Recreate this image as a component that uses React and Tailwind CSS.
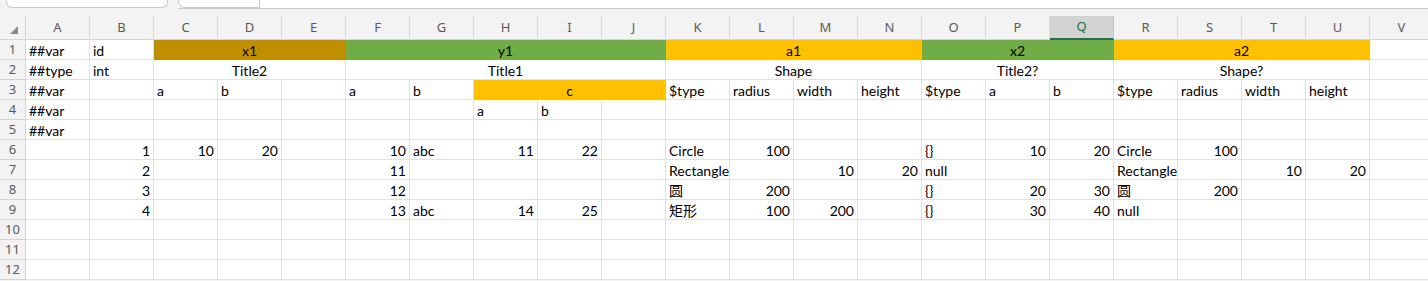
const cols = ['A', 'B', 'C', 'D', 'E', 'F', 'G', 'H', 'I', 'J', 'K', 'L', 'M', 'N', 'O', 'P', 'Q', 'R', 'S', 'T', 'U', 'V'];

const GOLD = 'bg-[#bf8f00] border-[#bf8f00]';
const GREEN = 'bg-[#70ad47] border-[#70ad47]';
const YELLOW = 'bg-[#ffc000] border-[#ffc000]';

// each row: list of cells { t: text, span, fill, align }
const L = (t) => ({ t, align: 'left' });
const R = (t) => ({ t, align: 'right' });
const E = () => ({ t: '' });
const M = (t, span, fill) => ({ t, span, fill, align: 'center' });

const rows = [
    [L('##var'), L('id'), M('x1', 3, GOLD), M('y1', 5, GREEN), M('a1', 4, YELLOW), M('x2', 3, GREEN), M('a2', 4, YELLOW), E()],
    [L('##type'), L('int'), M('Title2', 3), M('Title1', 5), M('Shape', 4), M('Title2?', 3), M('Shape?', 4), E()],
    [L('##var'), E(), L('a'), L('b'), E(), L('a'), L('b'), M('c', 3, YELLOW), L('$type'), L('radius'), L('width'), L('height'), L('$type'), L('a'), L('b'), L('$type'), L('radius'), L('width'), L('height'), E()],
    [L('##var'), E(), E(), E(), E(), E(), E(), L('a'), L('b'), E(), E(), E(), E(), E(), E(), E(), E(), E(), E(), E(), E(), E()],
    [L('##var'), ...Array(21).fill(0).map(E)],
    [E(), R('1'), R('10'), R('20'), E(), R('10'), L('abc'), R('11'), R('22'), E(), L('Circle'), R('100'), E(), E(), L('{}'), R('10'), R('20'), L('Circle'), R('100'), E(), E(), E()],
    [E(), R('2'), E(), E(), E(), R('11'), E(), E(), E(), E(), L('Rectangle'), E(), R('10'), R('20'), L('null'), E(), E(), L('Rectangle'), E(), R('10'), R('20'), E()],
    [E(), R('3'), E(), E(), E(), R('12'), E(), E(), E(), E(), L('圆'), R('200'), E(), E(), L('{}'), R('20'), R('30'), L('圆'), R('200'), E(), E(), E()],
    [E(), R('4'), E(), E(), E(), R('13'), L('abc'), R('14'), R('25'), E(), L('矩形'), R('100'), R('200'), E(), L('{}'), R('30'), R('40'), L('null'), E(), E(), E(), E()],
    Array(22).fill(0).map(E),
    Array(22).fill(0).map(E),
    Array(22).fill(0).map(E),
];

const spanClass = { 3: 'col-span-3', 4: 'col-span-4', 5: 'col-span-5' };

const Cell = ({ cell }) => {
    const align =
        cell.align === 'right' ? 'justify-end pr-[3px]' :
            cell.align === 'center' ? 'justify-center' : 'justify-start pl-[3px]';
    return (
        <div
            className={`h-5 flex items-center pt-[1px] overflow-visible whitespace-nowrap border-r border-b ${cell.fill || 'bg-white border-[#e1e1e1]'} ${spanClass[cell.span] || ''} ${align}`}
        >
            {cell.t}
        </div>
    );
};

export default function App() {
    return (
        <div className="w-[1428px] h-[281px] overflow-hidden bg-[#f3f3f3] text-[#000] font-['Lato','Noto_Sans_CJK_SC',sans-serif] text-[14px]">
            {/* name box + formula bar, mostly scrolled off */}
            <div className="h-4 flex items-start">
                <div className="ml-[6px] w-[162px] h-[8px] bg-white border border-t-0 border-[#c8c8c8] rounded-b-md" />
                <div className="ml-[10px] flex-1 h-[9px] bg-white border-b border-[#c8c8c8] flex">
                    <div className="w-[82px] h-[8px] border-l border-r border-b border-[#c8c8c8] rounded-bl-md" />
                </div>
            </div>

            <div className="grid grid-cols-[26px_repeat(22,64px)]">
                {/* column header row */}
                <div className="h-6 flex items-center justify-center border-r border-b border-[#d4d4d4]">
                    <svg width="8" height="8" viewBox="0 0 8 8" className="ml-[2px] mt-[4px]">
                        <polygon points="8,0 8,8 0,8" fill="#8a8a8a" />
                    </svg>
                </div>
                {cols.map((c) => (
                    <div
                        key={c}
                        className={`h-6 flex items-center justify-center text-[13px] font-['Noto_Sans',sans-serif] border-r ${c === 'Q' ? 'bg-[#d2d2d2] text-[#217346] border-b-2 border-b-[#217346] border-r-[#c6c6c6]' : 'text-[#5a5a5a] border-[#dadada] border-b border-b-[#d4d4d4]'}`}
                    >
                        {c}
                    </div>
                ))}

                {rows.map((row, ri) => (
                    <div key={ri} className="contents">
                        <div className="h-5 flex items-center justify-center text-[13px] text-[#5a5a5a] font-['Noto_Sans',sans-serif] border-r border-b border-[#d4d4d4]">
                            {ri + 1}
                        </div>
                        {row.map((cell, ci) => (
                            <Cell key={ci} cell={cell} />
                        ))}
                    </div>
                ))}
            </div>
        </div>
    );
}
